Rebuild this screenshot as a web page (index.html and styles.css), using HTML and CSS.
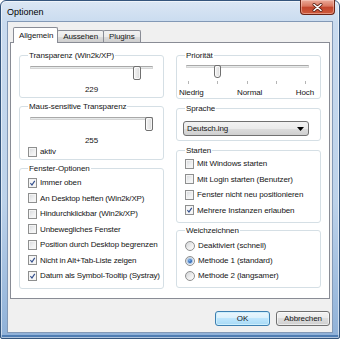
FILE: index.html
```html
<!DOCTYPE html>
<html lang="de">
<head>
  <meta charset="UTF-8">
  <title>Optionen</title>
  <link rel="stylesheet" href="styles.css">
</head>
<body>
  <div class="window">
    <div class="titlebar">
      <span class="title">Optionen</span>
      <div class="close">
        <svg width="11" height="9" viewBox="0 0 11 9">
          <path d="M2 1.5 L9 7.5 M9 1.5 L2 7.5" stroke="#5a2016" stroke-width="3" stroke-linecap="round"/>
          <path d="M2 1.5 L9 7.5 M9 1.5 L2 7.5" stroke="#fff" stroke-width="1.6" stroke-linecap="round"/>
        </svg>
      </div>
    </div>

    <div class="client">
      <div class="tabs">
        <span class="tab active">Allgemein</span>
        <span class="tab">Aussehen</span>
        <span class="tab">Plugins</span>
      </div>

      <div class="panel">
        <div class="col col-left">
          <fieldset class="group g-trans">
            <legend>Transparenz (Win2k/XP)</legend>
            <div class="slider">
              <div class="track"></div>
              <div class="thumb" style="left: 90%"></div>
            </div>
            <div class="value">229</div>
          </fieldset>

          <fieldset class="group g-maus">
            <legend>Maus-sensitive Transparenz</legend>
            <div class="slider">
              <div class="track"></div>
              <div class="thumb" style="left: 100%"></div>
            </div>
            <div class="value">255</div>
            <label class="check short"><span class="box"></span>aktiv</label>
          </fieldset>

          <fieldset class="group g-fenster">
            <legend>Fenster-Optionen</legend>
            <div class="list">
              <label class="check"><span class="box on"><svg viewBox="0 0 9 10"><path d="M1.8 5.2 L3.8 7.6 L7.4 2.2" fill="none" stroke="#34508e" stroke-width="1.5"/></svg></span>Immer oben</label>
              <label class="check"><span class="box"></span>An Desktop heften (Win2k/XP)</label>
              <label class="check"><span class="box"></span>Hindurchklickbar (Win2k/XP)</label>
              <label class="check"><span class="box"></span>Unbewegliches Fenster</label>
              <label class="check"><span class="box"></span>Position durch Desktop begrenzen</label>
              <label class="check"><span class="box on"><svg viewBox="0 0 9 10"><path d="M1.8 5.2 L3.8 7.6 L7.4 2.2" fill="none" stroke="#34508e" stroke-width="1.5"/></svg></span>Nicht in Alt+Tab-Liste zeigen</label>
              <label class="check"><span class="box on"><svg viewBox="0 0 9 10"><path d="M1.8 5.2 L3.8 7.6 L7.4 2.2" fill="none" stroke="#34508e" stroke-width="1.5"/></svg></span>Datum als Symbol-Tooltip (Systray)</label>
            </div>
          </fieldset>
        </div>

        <div class="col col-right">
          <fieldset class="group g-prio">
            <legend>Priorität</legend>
            <div class="slider slim">
              <div class="track"></div>
              <div class="thumb" style="left: 25%"></div>
            </div>
            <div class="ticks">
              <span></span><span></span><span></span><span></span><span></span>
            </div>
            <div class="scale">
              <span>Niedrig</span>
              <span>Normal</span>
              <span>Hoch</span>
            </div>
          </fieldset>

          <fieldset class="group g-lang">
            <legend>Sprache</legend>
            <div class="select">
              <span>Deutsch.lng</span>
              <svg width="7" height="4" viewBox="0 0 7 4"><path d="M0 0 H7 L3.5 4 Z" fill="#000"/></svg>
            </div>
          </fieldset>

          <fieldset class="group g-start">
            <legend>Starten</legend>
            <div class="list">
              <label class="check"><span class="box"></span>Mit Windows starten</label>
              <label class="check"><span class="box"></span>Mit Login starten (Benutzer)</label>
              <label class="check"><span class="box"></span>Fenster nicht neu positionieren</label>
              <label class="check"><span class="box on"><svg viewBox="0 0 9 10"><path d="M1.8 5.2 L3.8 7.6 L7.4 2.2" fill="none" stroke="#34508e" stroke-width="1.5"/></svg></span>Mehrere Instanzen erlauben</label>
            </div>
          </fieldset>

          <fieldset class="group g-smooth">
            <legend>Weichzeichnen</legend>
            <div class="list">
              <label class="radio"><span class="dot"></span>Deaktiviert (schnell)</label>
              <label class="radio"><span class="dot on"></span>Methode 1 (standard)</label>
              <label class="radio"><span class="dot"></span>Methode 2 (langsamer)</label>
            </div>
          </fieldset>
        </div>
      </div>

      <div class="buttons">
        <button class="btn default">OK</button>
        <button class="btn">Abbrechen</button>
      </div>
    </div>
  </div>
</body>
</html>
```

FILE: styles.css
```css
* {
  box-sizing: border-box;
  margin: 0;
  padding: 0;
}

body {
  width: 340px;
  height: 339px;
  overflow: hidden;
  font-family: "Liberation Sans", Arial, sans-serif;
  font-size: 8px;
  letter-spacing: -0.1px;
  color: #151515;
  background: #fff;
}

.window {
  width: 340px;
  height: 339px;
  display: flex;
  flex-direction: column;
  padding: 0 6px 5px 6px;
  border: 1px solid #34557c;
  border-radius: 6px 6px 2px 2px;
  background: linear-gradient(to bottom, #dbe7f4 0, #c9dbef 22px, #bcd2ea 60%, #8fb1d8 100%);
  box-shadow: inset 0 0 0 1px rgba(255, 255, 255, 0.55), inset 0 -3px 0 #4f7db3;
}

.titlebar {
  height: 20px;
  display: flex;
  align-items: flex-start;
  flex-shrink: 0;
}

.title {
  font-size: 9px;
  line-height: 12px;
  margin-top: 5px;
  letter-spacing: 0;
  color: #000;
}

.close {
  margin: -1px -2px 0 auto;
  width: 35px;
  height: 15px;
  display: flex;
  align-items: center;
  justify-content: center;
  border: 1px solid #6b2315;
  border-top: none;
  border-radius: 0 0 4px 4px;
  background: linear-gradient(to bottom, #ebab9a 0, #d9755e 45%, #c2452d 50%, #cf5a3c 100%);
  box-shadow: inset 0 0 0 1px rgba(255, 220, 210, 0.45);
}

.client {
  flex: 1;
  display: flex;
  flex-direction: column;
  padding: 5px 2px 6px 2px;
  background: #f0f0f0;
  border: 1px solid #8399b6;
}

/* tabs */
.tabs {
  display: flex;
  align-items: flex-end;
  margin: 0 0 -1px 3px;
  position: relative;
  z-index: 1;
}

.tab {
  height: 12px;
  margin-bottom: 1px;
  margin-left: -1px;
  padding: 0 5px;
  line-height: 11px;
  border: 1px solid #898c95;
  border-bottom: none;
  border-radius: 2px 2px 0 0;
  background: linear-gradient(to bottom, #f2f2f2 0, #ebebeb 50%, #dddddd 50%, #cfcfcf 100%);
}

.tab.active {
  height: 16px;
  margin: 0;
  padding: 2px 4px 0 5px;
  line-height: 11px;
  background: #fff;
  position: relative;
  z-index: 2;
}

.panel {
  flex: 1;
  display: grid;
  grid-template-columns: minmax(0, 1fr) minmax(0, 1fr);
  column-gap: 12px;
  align-items: start;
  padding: 7px 8px 0 8px;
  background: #fff;
  border: 1px solid #898c95;
}

.col {
  display: flex;
  flex-direction: column;
}

.col-left {
  gap: 3px;
}

.col-right {
  gap: 4px;
}

/* group boxes */
.group {
  border: 1px solid #d5dfe5;
  border-radius: 3px;
  padding: 0 8px 4px 8px;
  min-width: 0;
}

.group legend {
  padding: 0 1px;
  line-height: 11px;
}

.g-trans {
  padding-bottom: 2px;
}

.g-maus {
  padding-bottom: 2px;
}

.g-prio {
  padding-bottom: 0;
}

.g-smooth {
  margin-top: -2px;
}

/* trackbars */
.slider {
  position: relative;
  height: 14px;
  margin: 3px 2px 0 2px;
}

.g-maus .slider {
  margin-top: 4px;
}

.track {
  height: 3px;
  margin-top: 5px;
  background: #e7eaea;
  border: 1px solid #d6d6d6;
  border-top-color: #a9a9a9;
}

.thumb {
  position: absolute;
  top: 0;
  width: 8px;
  height: 14px;
  margin-left: -8px;
  border: 1px solid #707070;
  border-radius: 2px;
  background: linear-gradient(to right, #f4f4f4 0, #e9e9e9 50%, #d6d6d6 100%);
  box-shadow: inset 0 0 0 1px rgba(255, 255, 255, 0.7);
}

.slider.slim {
  height: 13px;
  margin: 1px 3px 0 1px;
}

.slider.slim .track {
  margin-top: 4px;
}

.slider.slim .thumb {
  width: 7px;
  height: 13px;
  margin-left: -3px;
  border-radius: 2px 2px 3px 3px;
}

.value {
  margin-top: 4px;
  line-height: 11px;
  text-align: center;
}

.g-maus .value {
  margin-top: 5px;
  line-height: 10px;
}

.ticks {
  display: flex;
  justify-content: space-between;
  height: 3px;
  margin: 3px 6px 0 3px;
}

.ticks span {
  width: 1px;
  height: 3px;
  background: #b5b5b5;
}

.scale {
  display: flex;
  justify-content: space-between;
  margin: 3px -2px 0 -6px;
  line-height: 11px;
}

/* check boxes and radios */
.list {
  display: flex;
  flex-direction: column;
}

.g-fenster .list {
  margin-top: 1px;
  letter-spacing: -0.15px;
}

.g-smooth .list {
  margin-top: 2px;
}

.check,
.radio {
  display: flex;
  align-items: center;
  gap: 3px;
  height: 15.5px;
  white-space: nowrap;
}

.radio {
  height: 15px;
}

.check.short {
  height: 11px;
}

.box {
  width: 9px;
  height: 10px;
  flex-shrink: 0;
  border: 1px solid #8e8f8f;
  background: linear-gradient(135deg, #d5d7da 0, #eeeff0 55%, #fbfbfb 100%);
  box-shadow: inset 0 0 0 1px #f4f4f4;
  display: flex;
}

.box.on {
  background: #f7f7f7;
}

.box svg {
  width: 7px;
  height: 8px;
}

.dot {
  width: 10px;
  height: 10px;
  flex-shrink: 0;
  border: 1px solid #8e8f8f;
  border-radius: 50%;
  background: linear-gradient(135deg, #d0d2d5 0, #f0f0f0 60%, #fdfdfd 100%);
  display: flex;
  align-items: center;
  justify-content: center;
}

.dot.on::after {
  content: "";
  width: 4px;
  height: 4px;
  border-radius: 50%;
  background: radial-gradient(circle at 40% 35%, #7fb4ec 0, #2a62b3 60%, #1b4185 100%);
  box-shadow: 0 0 1px 1px #9ec2ea;
}

/* dropdown */
.select {
  height: 15px;
  margin: 7px 3px 0 -2px;
  display: flex;
  align-items: center;
  justify-content: space-between;
  padding: 0 4px 0 3px;
  border: 1px solid #707070;
  border-radius: 3px;
  background: linear-gradient(to bottom, #f2f2f2 0, #ebebeb 50%, #dddddd 50%, #cfcfcf 100%);
}

/* buttons */
.buttons {
  display: flex;
  justify-content: flex-end;
  gap: 6px;
  margin-top: 12px;
}

.btn {
  height: 15px;
  width: 54px;
  font-family: inherit;
  font-size: 8px;
  letter-spacing: inherit;
  color: #151515;
  border: 1px solid #707070;
  border-radius: 3px;
  background: linear-gradient(to bottom, #f2f2f2 0, #ebebeb 50%, #dddddd 50%, #cfcfcf 100%);
  box-shadow: inset 0 0 0 1px rgba(255, 255, 255, 0.6);
}

.btn.default {
  width: 55px;
  border-color: #3c7fb1;
  background: linear-gradient(to bottom, #eaf6fd 0, #d9f0fc 50%, #bee6fd 50%, #a7d9f5 100%);
  box-shadow: inset 0 0 0 1px #cdeffd;
}
```
